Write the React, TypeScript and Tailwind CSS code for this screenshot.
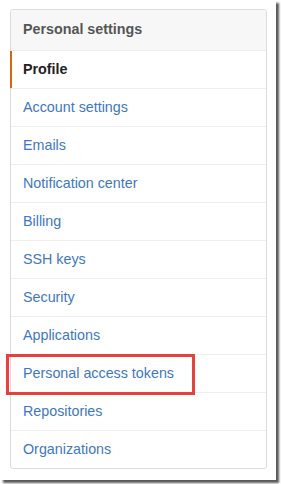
import React from "react";

const items = [
  "Account settings",
  "Emails",
  "Notification center",
  "Billing",
  "SSH keys",
  "Security",
  "Applications",
  "Personal access tokens",
  "Repositories",
  "Organizations",
];

export default function App() {
  return (
    <div
      className="relative w-[281px] h-[484px] bg-white"
      style={{ fontFamily: '"Liberation Sans", Arial, sans-serif' }}
    >
      <div className="w-[276px] h-[480px] bg-white shadow-[3px_3px_2px_rgba(0,0,0,0.65)] pt-[9px] pl-[10px]">
        <nav className="w-[257px] border border-[#dcdcdc] rounded-[3px] bg-white">
          <div className="h-[40px] bg-[#f7f7f7] rounded-t-[2px] px-[12px] flex items-center text-[14.3px] font-bold text-[#555]">
            Personal settings
          </div>
          <div className="relative h-[38px] border-t border-[#eee] flex items-center px-[12px] text-[14.3px] font-bold text-[#222]">
            <span className="absolute left-[-1px] top-0 bottom-0 w-[2px] bg-[#d26911]" />
            Profile
          </div>
          {items.map((it) => (
            <div
              key={it}
              className="h-[38px] border-t border-[#eee] flex items-center px-[12px] text-[14.3px] text-[#4078c0]"
            >
              {it}
            </div>
          ))}
        </nav>
      </div>
      <div className="absolute left-[6px] top-[354px] w-[189px] h-[41px] border-[3px] border-[#e8413c]" />
    </div>
  );
}
